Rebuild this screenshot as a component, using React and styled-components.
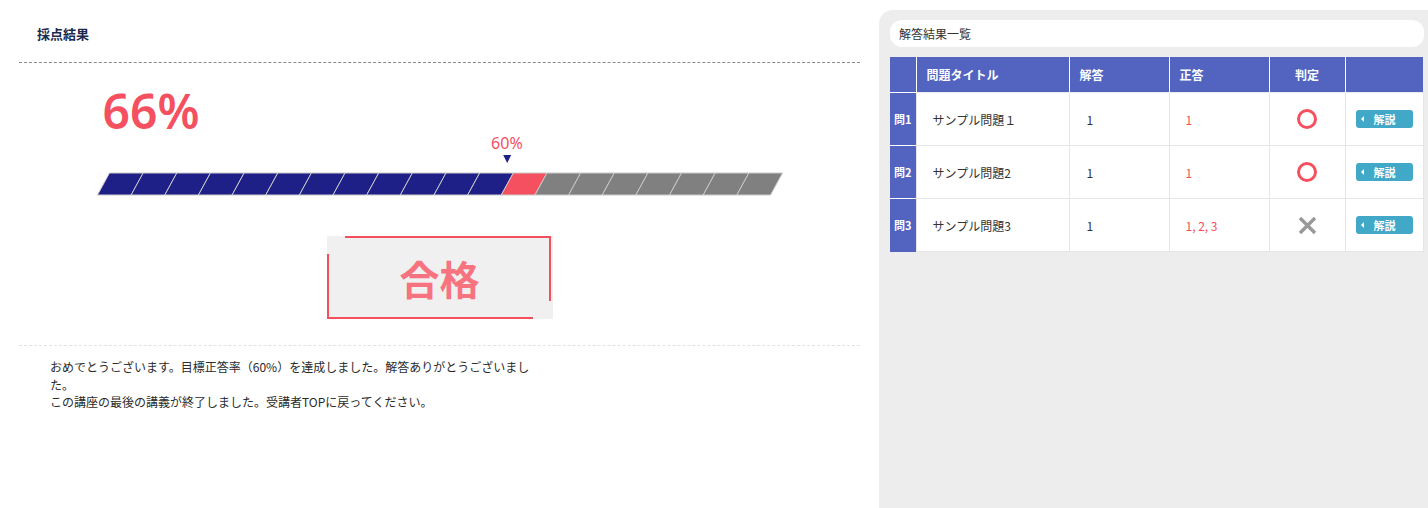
import React from 'react';
import styled, { createGlobalStyle } from 'styled-components';

const GlobalStyle = createGlobalStyle`
  html, body {
    margin: 0;
    padding: 0;
    height: 100%;
    overflow: hidden;
    background: #fff;
  }
  body {
    font-family: "Noto Sans CJK JP", "Noto Sans", sans-serif;
    color: #333;
  }
  #root {
    height: 100%;
  }
`;

const Page = styled.div`
  display: flex;
  height: 100%;
`;

const ResultArea = styled.section`
  width: 841px;
  padding: 0 19px;
  flex-shrink: 0;
`;

const Header = styled.div`
  height: 63px;
  box-sizing: border-box;
  padding: 24px 0 0 18px;
  border-bottom: 1px dashed #8a8a8a;
`;

const HeaderTitle = styled.h2`
  margin: 0;
  font-size: 13px;
  line-height: 20px;
  font-weight: 700;
  color: #1b2a4e;
`;

const Chart = styled.div`
  width: 686px;
  margin: 0 auto;
  padding-top: 23px;
`;

const Score = styled.div`
  margin-left: 6px;
  font-family: "Noto Sans", "Noto Sans CJK JP", sans-serif;
  font-size: 48px;
  line-height: 50px;
  font-weight: 600;
  color: #f5505f;
`;

const BarWrap = styled.div`
  position: relative;
  margin-top: 36px;
  height: 24px;
`;

const Marker = styled.div`
  position: absolute;
  bottom: 33px;
  transform: translateX(-50%);
  display: flex;
  flex-direction: column;
  align-items: center;
`;

const MarkerLabel = styled.span`
  font-family: "Noto Sans", sans-serif;
  font-size: 16px;
  line-height: 18px;
  color: #f5505f;
`;

const MarkerArrow = styled.span`
  margin-top: 3px;
  width: 0;
  height: 0;
  border-left: 4px solid transparent;
  border-right: 4px solid transparent;
  border-top: 8px solid #1e2088;
`;

const PassBox = styled.div`
  position: relative;
  width: 226px;
  height: 83px;
  margin: 40px auto 0;
  background: #f0f0f0;
  display: flex;
  align-items: center;
  justify-content: center;
  font-size: 40px;
  font-weight: 700;
  color: #f7737f;

  &::before {
    content: '';
    position: absolute;
    top: 0;
    right: 2px;
    left: 18px;
    bottom: 18px;
    border-top: 2px solid #f24f5f;
    border-right: 2px solid #f24f5f;
  }

  &::after {
    content: '';
    position: absolute;
    top: 18px;
    left: 0;
    right: 20px;
    bottom: 0;
    border-left: 2px solid #f24f5f;
    border-bottom: 2px solid #f24f5f;
  }
`;

const Message = styled.div`
  margin-top: 26px;
  border-top: 1px dashed #e2e2e2;
  padding: 12px 0 0 31px;
`;

const MessageText = styled.p`
  margin: 0;
  max-width: 484px;
  font-size: 12px;
  line-height: 17.5px;
  color: #2b2b2b;
`;

const Panel = styled.aside`
  flex: 1;
  margin-top: 10px;
  background: #ededed;
  border-top-left-radius: 14px;
  padding: 10px 5px 0 11px;
`;

const PanelTitle = styled.div`
  height: 27px;
  background: #fff;
  border-radius: 12px;
  padding-left: 9px;
  display: flex;
  align-items: center;
  font-size: 12px;
  color: #333;
`;

const Table = styled.table`
  margin-top: 10px;
  width: 533px;
  border-collapse: collapse;
  table-layout: fixed;
  font-size: 12px;
`;

const HeadCell = styled.th`
  height: 35px;
  padding: 0 0 0 ${({ $pad }) => $pad}px;
  background: #5263c0;
  color: #fff;
  font-weight: 700;
  text-align: ${({ $center }) => ($center ? 'center' : 'left')};
  border-left: 1px solid #fff;
  &:first-child {
    border-left: none;
  }
`;

const NumCell = styled.td`
  height: 52px;
  padding: 0;
  background: #5263c0;
  color: #fff;
  font-size: 11px;
  font-weight: 700;
  text-align: center;
  border-top: 1px solid #fff;
`;

const Cell = styled.td`
  height: 52px;
  padding: 0 0 0 ${({ $pad }) => $pad}px;
  background: #fff;
  border: 1px solid #e6e6e6;
  border-top: 1px solid #ececec;
  color: ${({ $red }) => ($red ? '#f5505f' : '#333')};
  text-align: ${({ $center }) => ($center ? 'center' : 'left')};
  vertical-align: middle;
`;

const Ring = styled.span`
  display: inline-block;
  width: 14px;
  height: 14px;
  border: 3px solid #f5505f;
  border-radius: 50%;
  vertical-align: middle;
`;

const ExplainButton = styled.button`
  display: flex;
  align-items: center;
  width: 57px;
  height: 18px;
  padding: 0 0 0 5px;
  border: none;
  border-radius: 3px;
  background: #42a8c8;
  color: #fff;
  font-family: inherit;
  font-size: 11px;
  font-weight: 700;
  cursor: pointer;

  &::before {
    content: '';
    width: 0;
    height: 0;
    margin-right: 10px;
    border-top: 3px solid transparent;
    border-bottom: 3px solid transparent;
    border-right: 3px solid #fff;
  }
`;

const SEGMENTS = 20;
const BAR_W = 686;
const BAR_H = 22;
const SKEW = 12;

function ScoreBar({ score, target }) {
  const segW = (BAR_W - SKEW) / SEGMENTS;
  const targetSegs = Math.floor(target / (100 / SEGMENTS));
  const scoreSegs = Math.floor(score / (100 / SEGMENTS));
  const y0 = 1;
  const y1 = BAR_H + 1;
  const segs = [];
  for (let i = 0; i < SEGMENTS; i++) {
    const fill = i < targetSegs ? '#1e2088' : i < scoreSegs ? '#f5505f' : '#808080';
    const points = [
      [SKEW + i * segW, y0],
      [SKEW + (i + 1) * segW, y0],
      [(i + 1) * segW, y1],
      [i * segW, y1],
    ]
      .map((p) => p.join(','))
      .join(' ');
    segs.push(<polygon key={i} points={points} fill={fill} stroke="#c8c8c8" strokeWidth="1" />);
  }
  return (
    <svg width={BAR_W} height={BAR_H + 2} viewBox={`-0.5 0 ${BAR_W + 1} ${BAR_H + 2}`}>
      {segs}
    </svg>
  );
}

function Judge({ ok }) {
  if (ok) return <Ring />;
  return (
    <svg width="19" height="19" viewBox="0 0 19 19" style={{ verticalAlign: 'middle' }}>
      <path d="M2 2 L17 17 M17 2 L2 17" stroke="#999" strokeWidth="3.4" />
    </svg>
  );
}

const rows = [
  { no: '問1', title: 'サンプル問題１', answer: '1', correct: '1', ok: true },
  { no: '問2', title: 'サンプル問題2', answer: '1', correct: '1', ok: true },
  { no: '問3', title: 'サンプル問題3', answer: '1', correct: '1, 2, 3', ok: false },
];

export default function App() {
  const score = 66;
  const target = 60;
  const markerLeft = SKEW / 2 + ((BAR_W - SKEW) * target) / 100;

  return (
    <>
      <GlobalStyle />
      <Page>
        <ResultArea>
          <Header>
            <HeaderTitle>採点結果</HeaderTitle>
          </Header>
          <Chart>
            <Score>{score}%</Score>
            <BarWrap>
              <Marker style={{ left: markerLeft }}>
                <MarkerLabel>{target}%</MarkerLabel>
                <MarkerArrow />
              </Marker>
              <ScoreBar score={score} target={target} />
            </BarWrap>
            <PassBox>合格</PassBox>
          </Chart>
          <Message>
            <MessageText>
              おめでとうございます。目標正答率（60%）を達成しました。解答ありがとうございました。
              <br />
              この講座の最後の講義が終了しました。受講者TOPに戻ってください。
            </MessageText>
          </Message>
        </ResultArea>
        <Panel>
          <PanelTitle>解答結果一覧</PanelTitle>
          <Table>
            <colgroup>
              <col style={{ width: 26 }} />
              <col style={{ width: 153 }} />
              <col style={{ width: 100 }} />
              <col style={{ width: 100 }} />
              <col style={{ width: 76 }} />
              <col style={{ width: 78 }} />
            </colgroup>
            <thead>
              <tr>
                <HeadCell $pad={0} />
                <HeadCell $pad={10}>問題タイトル</HeadCell>
                <HeadCell $pad={10}>解答</HeadCell>
                <HeadCell $pad={10}>正答</HeadCell>
                <HeadCell $pad={0} $center>判定</HeadCell>
                <HeadCell $pad={0} />
              </tr>
            </thead>
            <tbody>
              {rows.map((r) => (
                <tr key={r.no}>
                  <NumCell>{r.no}</NumCell>
                  <Cell $pad={16}>{r.title}</Cell>
                  <Cell $pad={17}>{r.answer}</Cell>
                  <Cell $pad={16} $red>{r.correct}</Cell>
                  <Cell $pad={0} $center>
                    <Judge ok={r.ok} />
                  </Cell>
                  <Cell $pad={10}>
                    <ExplainButton>解説</ExplainButton>
                  </Cell>
                </tr>
              ))}
            </tbody>
          </Table>
        </Panel>
      </Page>
    </>
  );
}
